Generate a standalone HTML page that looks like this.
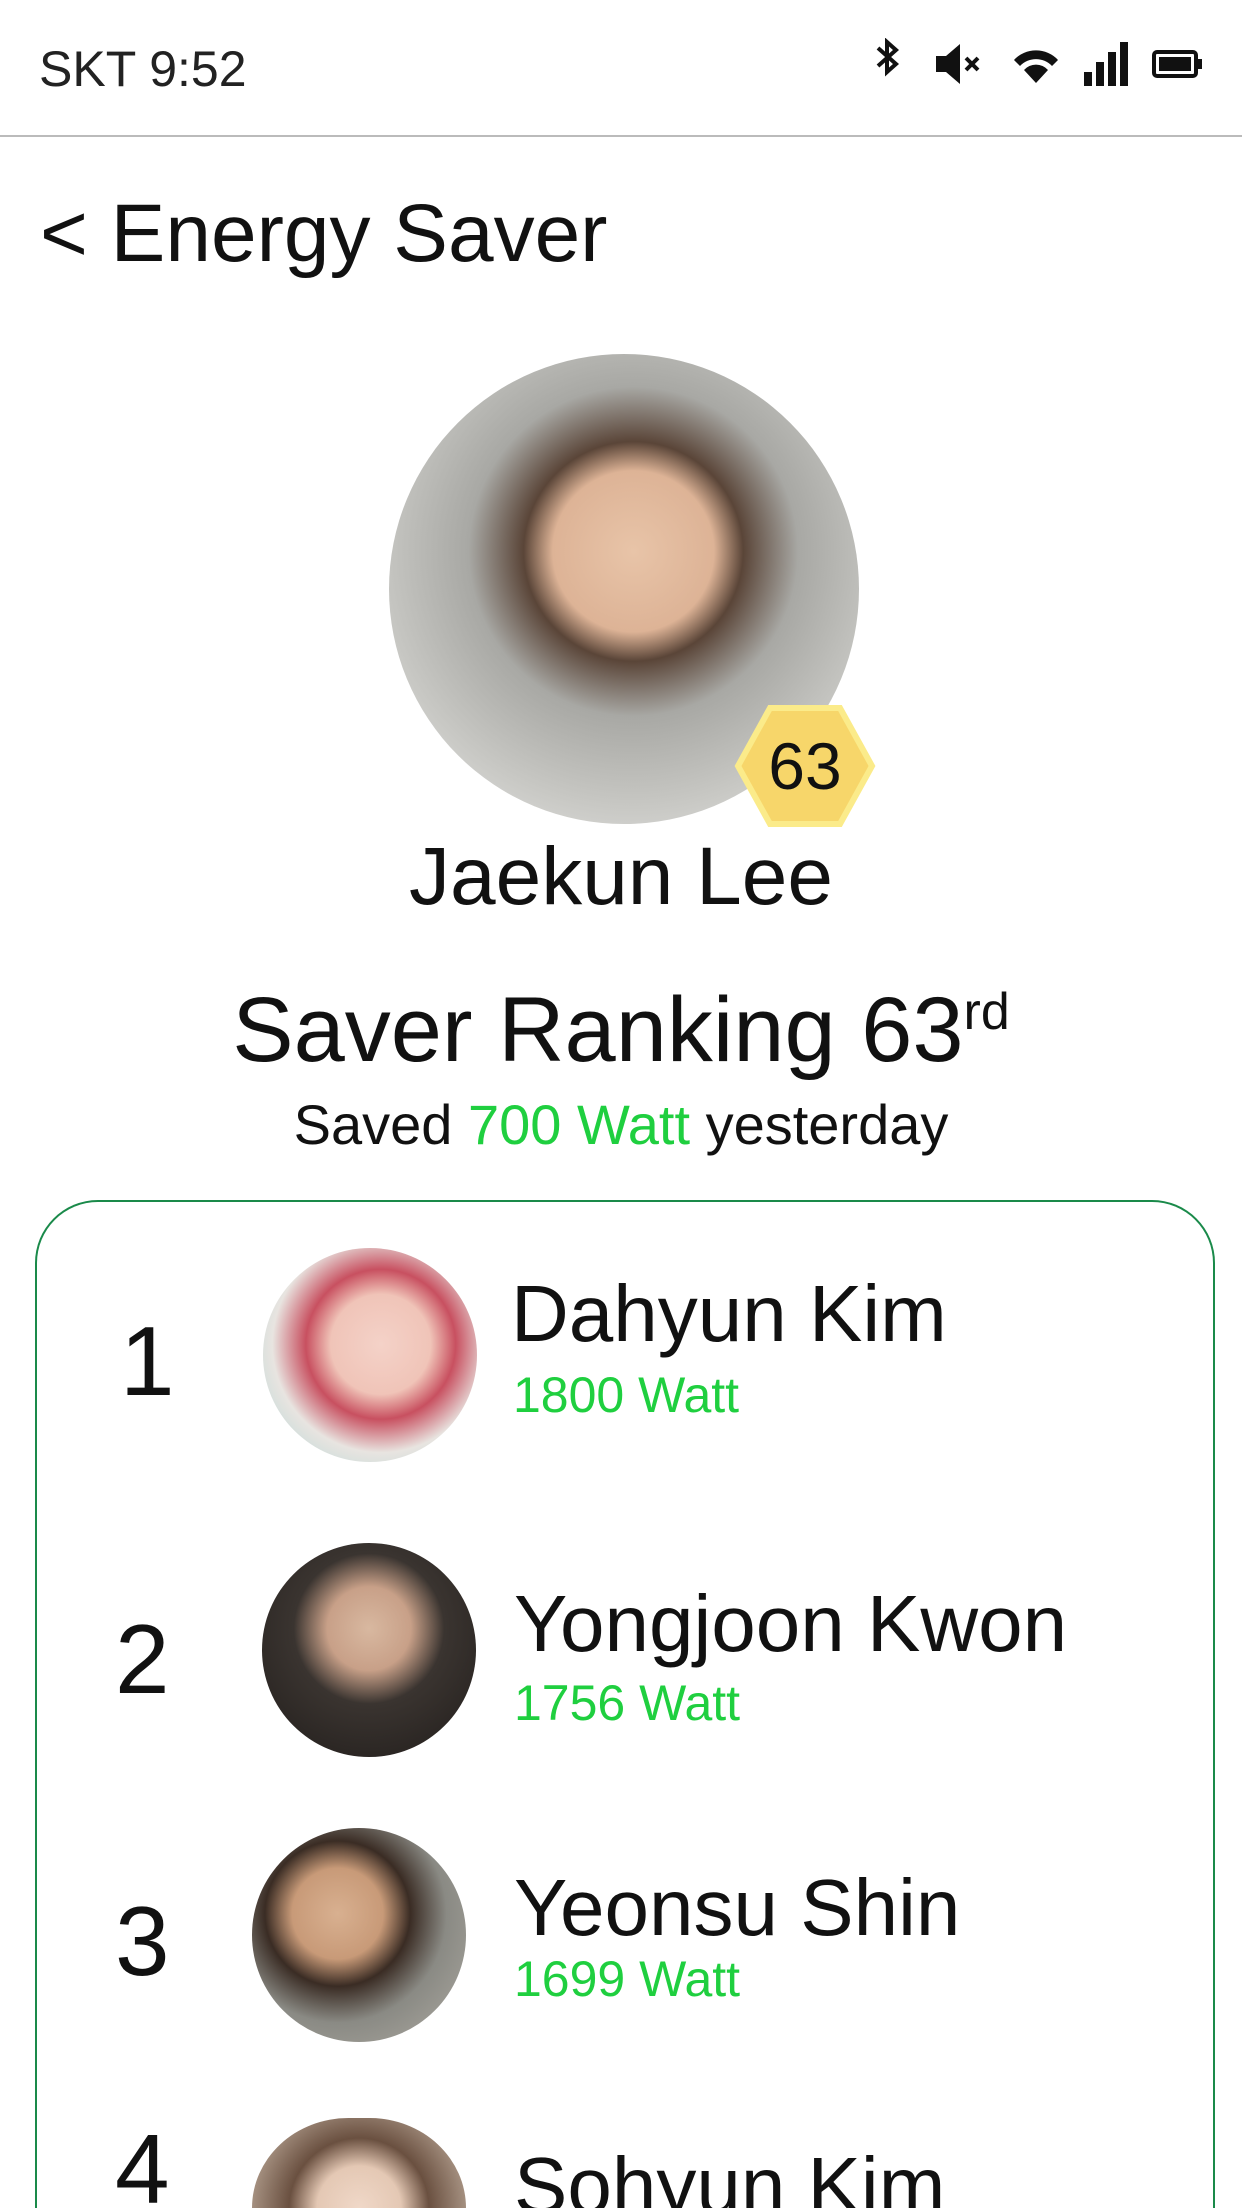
<!DOCTYPE html>
<html style="height:2208px;overflow:hidden"><head><meta charset="utf-8">
<style>
*{margin:0;padding:0;box-sizing:border-box}
body{width:1242px;height:2208px;overflow:hidden;background:#fff;font-family:"Liberation Sans",sans-serif;color:#111;position:relative}
.a{position:absolute;white-space:nowrap}
.g{color:#1fcf3f}
.av{position:absolute;border-radius:50%;overflow:hidden}
</style></head><body>
<div class="a" style="left:39px;top:40px;font-size:50px;color:#222">SKT 9:52</div>
<svg class="a" style="left:868px;top:38px" width="350" height="56" viewBox="0 0 350 56">
 <path d="M10 10 L28 26 L19 34 V4 L28 12 L10 28" fill="none" stroke="#111" stroke-width="4"/>
 <path d="M68 18 H78 L92 6 V46 L78 34 H68 Z" fill="#111"/>
 <path d="M98 20 L110 32 M110 20 L98 32" stroke="#111" stroke-width="4"/>
 <path d="M146 22 A30 30 0 0 1 190 22 L184 28 A22 22 0 0 0 152 28 Z M156 32 A16 16 0 0 1 180 32 L168 45 Z" fill="#111"/>
 <rect x="216" y="34" width="8" height="14" fill="#111"/><rect x="228" y="24" width="8" height="24" fill="#111"/><rect x="240" y="14" width="8" height="34" fill="#111"/><rect x="252" y="4" width="8" height="44" fill="#111"/>
 <rect x="286" y="14" width="42" height="24" rx="3" fill="none" stroke="#111" stroke-width="4"/>
 <rect x="291" y="19" width="32" height="14" fill="#111"/><rect x="329" y="21" width="5" height="10" fill="#111"/>
</svg>
<div class="a" style="left:0;top:135px;width:1242px;height:2px;background:#bbb"></div>
<div class="a" style="left:40px;top:187px;font-size:82px;color:#111">&lt; Energy Saver</div>
<div class="av" style="left:389px;top:354px;width:470px;height:470px;background:radial-gradient(circle at 52% 42%,#e8c4a8 0,#ddb396 22%,#5a4538 30%,#a8a8a4 45%,#c8c8c4 70%,#eee 100%)"></div>
<svg class="a" style="left:734px;top:704px" width="142" height="124" viewBox="0 0 142 124"><polygon points="36,4 106,4 138,62 106,120 36,120 4,62" fill="#f7d66a" stroke="#fbeb8a" stroke-width="6"/></svg>
<div class="a" style="left:734px;top:728px;width:142px;text-align:center;font-size:66px">63</div>
<div class="a" style="left:0;top:830px;width:1242px;text-align:center;font-size:82px">Jaekun Lee</div>
<div class="a" style="left:0;top:978px;width:1242px;text-align:center;font-size:92px">Saver Ranking 63<sup style="font-size:52px;vertical-align:32px">rd</sup></div>
<div class="a" style="left:0;top:1092px;width:1242px;text-align:center;font-size:56px">Saved <span class="g">700 Watt</span> yesterday</div>
<div class="a" style="left:35px;top:1200px;width:1180px;height:1008px;border:2px solid #1a8a4a;border-bottom:0;border-radius:63px 63px 0 0"></div>

<div class="a" style="left:120px;top:1305px;font-size:98px">1</div>
<div class="av" style="left:263px;top:1248px;width:214px;height:214px;background:radial-gradient(circle at 55% 45%,#f4d2c8 0,#f0c4b8 30%,#c85060 45%,#e8e4e0 65%,#a8d4d4 100%)"></div>
<div class="a" style="left:511px;top:1268px;font-size:80px">Dahyun Kim</div>
<div class="a g" style="left:513px;top:1366px;font-size:50px">1800 Watt</div>

<div class="a" style="left:115px;top:1603px;font-size:98px">2</div>
<div class="av" style="left:262px;top:1543px;width:214px;height:214px;background:radial-gradient(circle at 50% 40%,#d8b8a0 0,#c8a088 25%,#3a3430 45%,#201c1a 100%)"></div>
<div class="a" style="left:514px;top:1578px;font-size:80px">Yongjoon Kwon</div>
<div class="a g" style="left:514px;top:1674px;font-size:50px">1756 Watt</div>

<div class="a" style="left:115px;top:1885px;font-size:98px">3</div>
<div class="av" style="left:252px;top:1828px;width:214px;height:214px;background:radial-gradient(circle at 40% 40%,#d8b090 0,#c89a78 25%,#3a2c24 40%,#8a8a84 60%,#b0aca4 100%)"></div>
<div class="a" style="left:514px;top:1862px;font-size:80px">Yeonsu Shin</div>
<div class="a g" style="left:514px;top:1950px;font-size:50px">1699 Watt</div>

<div class="a" style="left:115px;top:2130px;font-size:98px;line-height:78px;height:78px">4</div>
<div class="a" style="left:252px;top:2118px;width:214px;height:90px;border-radius:107px 107px 0 0/100px 100px 0 0;background:radial-gradient(circle at 50% 100%,#f0d8c8 0,#e4c8b4 30%,#6a5040 50%,#d8c8b8 100%)"></div>
<div class="a" style="left:514px;top:2164px;font-size:80px;line-height:44px;height:44px">Sohyun Kim</div>
</body></html>
